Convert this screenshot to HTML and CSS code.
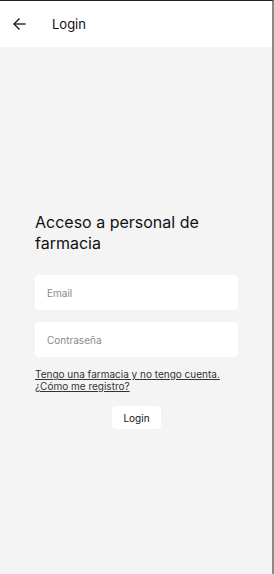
FILE: index.html
```html
<!DOCTYPE html>
<html lang="es">
<head>
  <meta charset="UTF-8">
  <meta name="viewport" content="width=device-width, initial-scale=1">
  <title>Login</title>
  <link rel="stylesheet" href="styles.css">
</head>
<body>
  <div class="screen">
    <!-- Cabecera -->
    <header class="top-bar">
      <button class="back-button" aria-label="Volver">
        <svg width="13" height="12" viewBox="0 0 13 12" fill="none" stroke="#111" stroke-width="1.3" stroke-linecap="square">
          <path d="M12 6H1.5"/>
          <path d="M6 1L1 6L6 11"/>
        </svg>
      </button>
      <h1 class="top-title">Login</h1>
    </header>

    <!-- Formulario -->
    <main class="content">
      <form class="login-form">
        <h2 class="form-title">Acceso a personal de farmacia</h2>
        <input class="field" type="email" placeholder="Email">
        <input class="field" type="password" placeholder="Contraseña">
        <a class="register-link" href="#">Tengo una farmacia y no tengo cuenta. ¿Cómo me registro?</a>
        <button class="login-button" type="button">Login</button>
      </form>
    </main>
  </div>
</body>
</html>
```

FILE: styles.css
```css
* {
  box-sizing: border-box;
  margin: 0;
  padding: 0;
  font-family: Inter, "Noto Sans", sans-serif;
}

html, body {
  width: 100%;
  height: 100%;
  background-color: #f4f4f4;
}

.screen {
  display: flex;
  flex-direction: column;
  height: 574px;
  border-top: 1px solid #222;
  border-right: 2px solid #8a8a8a;
  background-color: #f4f4f4;
}

.top-bar {
  display: flex;
  align-items: center;
  height: 46px;
  background-color: white;
  padding-left: 13px;
}

.back-button {
  display: flex;
  align-items: center;
  border: none;
  background: none;
  width: 13px;
  height: 12px;
  cursor: pointer;
}

.top-title {
  margin-left: 26px;
  font-size: 13px;
  font-weight: 400;
  color: #111;
}

.content {
  flex: 1;
  padding: 165px 34px 0 35px;
}

.login-form {
  display: flex;
  flex-direction: column;
}

.form-title {
  font-size: 16px;
  font-weight: 400;
  line-height: 21px;
  color: #111;
  margin-bottom: 21px;
}

.field {
  height: 35px;
  border: none;
  border-radius: 4px;
  background-color: white;
  padding: 0 12px;
  font-size: 10px;
  color: #111;
  margin-bottom: 12px;
  outline: none;
}

.field::placeholder {
  color: #8a8a8a;
}

.register-link {
  margin-top: -1px;
  font-size: 10px;
  line-height: 12px;
  color: #333;
  text-decoration: underline;
}

.login-button {
  align-self: center;
  margin-top: 14px;
  width: 49px;
  height: 23px;
  border: none;
  border-radius: 4px;
  background-color: white;
  font-size: 10px;
  color: #111;
  cursor: pointer;
}
```
